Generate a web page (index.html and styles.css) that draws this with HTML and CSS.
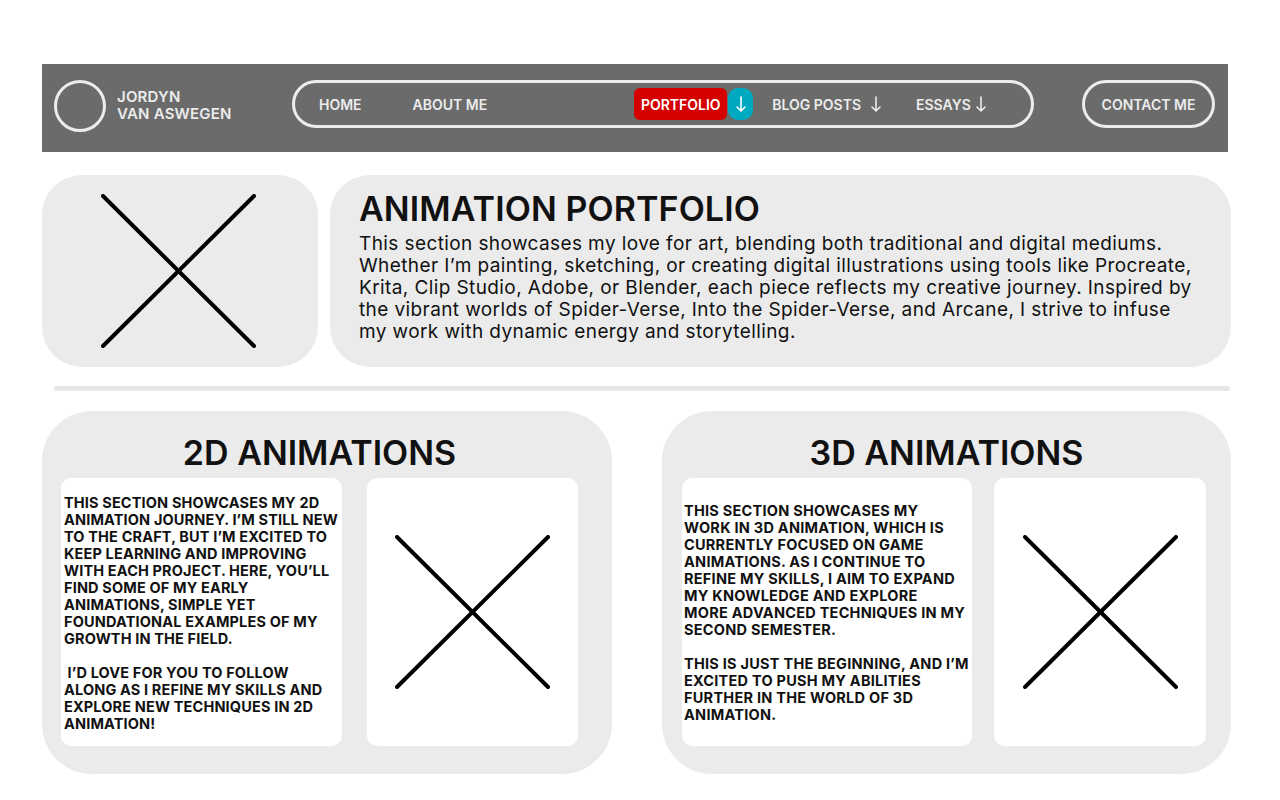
FILE: index.html
```html
<!DOCTYPE html>
<html lang="en">
<head>
<meta charset="utf-8">
<title>Animation Portfolio</title>
<link rel="stylesheet" href="styles.css">
</head>
<body>
<div class="page">
  <header class="topbar">
    <div class="brand">
      <div class="logo"></div>
      <div class="name">JORDYN<br>VAN ASWEGEN</div>
    </div>
    <nav class="nav">
      <a class="nav-item home">HOME</a>
      <a class="nav-item about">ABOUT ME</a>
      <span class="nav-active">PORTFOLIO</span><span class="nav-drop"><svg class="arrow" viewBox="0 0 10 16"><path d="M5 1V15M1 11L5 15L9 11"/></svg></span>
      <a class="nav-item blog">BLOG POSTS<svg class="arrow" viewBox="0 0 10 16"><path d="M5 1V15M1 11L5 15L9 11"/></svg></a>
      <a class="nav-item essays">ESSAYS<svg class="arrow" viewBox="0 0 10 16"><path d="M5 1V15M1 11L5 15L9 11"/></svg></a>
    </nav>
    <a class="contact">CONTACT ME</a>
  </header>

  <section class="intro">
    <div class="card placeholder intro-img">
      <svg class="x" viewBox="0 0 155 154"><line x1="2" y1="2" x2="153" y2="152"/><line x1="153" y1="2" x2="2" y2="152"/></svg>
    </div>
    <div class="card intro-text">
      <h1>ANIMATION PORTFOLIO</h1>
      <p>This section showcases my love for art, blending both traditional and digital mediums.<br>Whether I’m painting, sketching, or creating digital illustrations using tools like Procreate,<br>Krita, Clip Studio, Adobe, or Blender, each piece reflects my creative journey. Inspired by<br>the vibrant worlds of Spider-Verse, Into the Spider-Verse, and Arcane, I strive to infuse<br>my work with dynamic energy and storytelling.</p>
    </div>
  </section>

  <div class="divider"></div>

  <section class="sections">
    <article class="card section s2d">
      <h2>2D ANIMATIONS</h2>
      <div class="section-body">
        <div class="box text-box">
          <p>THIS SECTION SHOWCASES MY 2D<br>ANIMATION JOURNEY. I’M STILL NEW<br>TO THE CRAFT, BUT I’M EXCITED TO<br>KEEP LEARNING AND IMPROVING<br>WITH EACH PROJECT. HERE, YOU’LL<br>FIND SOME OF MY EARLY<br>ANIMATIONS, SIMPLE YET<br>FOUNDATIONAL EXAMPLES OF MY<br>GROWTH IN THE FIELD.</p>
          <p>&nbsp;I’D LOVE FOR YOU TO FOLLOW<br>ALONG AS I REFINE MY SKILLS AND<br>EXPLORE NEW TECHNIQUES IN 2D<br>ANIMATION!</p>
        </div>
        <div class="box img-box">
          <svg class="x" viewBox="0 0 155 154"><line x1="2" y1="2" x2="153" y2="152"/><line x1="153" y1="2" x2="2" y2="152"/></svg>
        </div>
      </div>
    </article>
    <article class="card section s3d">
      <h2>3D ANIMATIONS</h2>
      <div class="section-body">
        <div class="box text-box centered">
          <p>THIS SECTION SHOWCASES MY<br>WORK IN 3D ANIMATION, WHICH IS<br>CURRENTLY FOCUSED ON GAME<br>ANIMATIONS. AS I CONTINUE TO<br>REFINE MY SKILLS, I AIM TO EXPAND<br>MY KNOWLEDGE AND EXPLORE<br>MORE ADVANCED TECHNIQUES IN MY<br>SECOND SEMESTER.</p>
          <p>THIS IS JUST THE BEGINNING, AND I’M<br>EXCITED TO PUSH MY ABILITIES<br>FURTHER IN THE WORLD OF 3D<br>ANIMATION.</p>
        </div>
        <div class="box img-box">
          <svg class="x" viewBox="0 0 155 154"><line x1="2" y1="2" x2="153" y2="152"/><line x1="153" y1="2" x2="2" y2="152"/></svg>
        </div>
      </div>
    </article>
  </section>
</div>
</body>
</html>
```

FILE: styles.css
```css
* { box-sizing: border-box; }
html, body { margin: 0; padding: 0; background: #fff; }
body { font-family: Inter, "Liberation Sans", sans-serif; color: #111; }

.page { padding: 64px 0 0 42px; width: 1280px; }

/* Header */
.topbar {
  width: 1186px;
  height: 88px;
  background: #6b6b6b;
  display: flex;
  align-items: flex-start;
  padding: 16px 0 0 12px;
  color: #ececec;
}
.brand { width: 238px; display: flex; align-items: center; gap: 11px; }
.logo { width: 52px; height: 52px; border: 3px solid #ececec; border-radius: 50%; }
.name { font-size: 15px; font-weight: 600; line-height: 17px; letter-spacing: 0.2px; padding-bottom: 2px; }

.nav {
  width: 742px;
  height: 48px;
  border: 3px solid #ececec;
  border-radius: 24px;
  display: flex;
  align-items: center;
  padding-left: 24px;
  font-size: 14px;
  font-weight: 600;
}
.nav-item { color: #ececec; white-space: nowrap; display: flex; align-items: center; }
.about { margin-left: 51px; }
.nav-active {
  margin-left: 147px;
  background: #d50000;
  color: #fff;
  height: 32px;
  width: 93px;
  border-radius: 6px;
  display: flex;
  align-items: center;
  justify-content: center;
}
.nav-drop {
  margin-left: 1px;
  background: #00a9c2;
  color: #fff;
  width: 25px;
  height: 32px;
  border-radius: 10px;
  display: flex;
  align-items: center;
  justify-content: center;
}
.arrow { width: 10px; height: 16px; display: block; }
.arrow path { fill: none; stroke: currentColor; stroke-width: 1.6; stroke-linecap: round; stroke-linejoin: round; }
.blog { margin-left: 19px; }
.blog .arrow { margin-left: 10px; }
.essays { margin-left: 35px; }
.essays .arrow { margin-left: 5px; }

.contact {
  margin-left: 48px;
  width: 133px;
  height: 48px;
  border: 3px solid #ececec;
  border-radius: 24px;
  display: flex;
  align-items: center;
  justify-content: center;
  font-size: 14px;
  font-weight: 600;
  color: #ececec;
}

/* Cards */
.card { background: #ebebeb; }

.intro { display: flex; gap: 12px; margin-top: 23px; height: 192px; }
.intro-img {
  width: 276px;
  border-radius: 40px;
  display: flex;
  align-items: center;
  justify-content: center;
  padding-right: 3px;
}
.intro-text {
  width: 901px;
  border-radius: 40px;
  padding: 14px 10px 0 29px;
}
.intro-text h1 {
  margin: 0;
  font-size: 34px;
  font-weight: 600;
  line-height: 40px;
  letter-spacing: 0.1px;
}
.intro-text p {
  margin: 4px 0 0;
  font-size: 19px;
  line-height: 22px;
  font-weight: 400;
  letter-spacing: 0.4px;
  white-space: nowrap;
}

.x { width: 155px; height: 154px; display: block; }
.x line { stroke: #000; stroke-width: 4; stroke-linecap: round; }

.divider {
  margin: 19px 0 0 12px;
  width: 1176px;
  height: 5px;
  border-radius: 3px;
  background: #e6e6e6;
}

.sections { display: flex; gap: 50px; margin-top: 20px; }
.section {
  height: 363px;
  border-radius: 50px;
  display: flex;
  flex-direction: column;
}
.s2d { width: 570px; }
.s3d { width: 569px; }
.section h2 {
  margin: 0;
  height: 67px;
  display: flex;
  align-items: center;
  justify-content: center;
  padding-top: 16px;
  font-size: 34px;
  font-weight: 600;
  letter-spacing: 0;
}
.s2d h2 { padding-left: 19px; padding-right: 34px; }
.section-body { display: flex; height: 268px; }
.s2d .section-body { gap: 25px; padding: 0 34px 0 19px; }
.s3d .section-body { gap: 22px; padding: 0 25px 0 20px; }
.s2d .text-box { width: 281px; }
.s3d .text-box { width: 290px; }
.img-box { flex: 1; display: flex; align-items: center; justify-content: center; }
.box { background: #fff; border-radius: 10px; }
.text-box { padding: 16px 0 0 3px; }
.text-box.centered { padding: 24px 0 0 2px; }
.text-box p {
  margin: 0 0 17px;
  font-size: 14.5px;
  line-height: 17px;
  font-weight: 700;
  letter-spacing: 0.15px;
  white-space: nowrap;
  color: #111;
}
.text-box.centered p { letter-spacing: 0.25px; }
```
